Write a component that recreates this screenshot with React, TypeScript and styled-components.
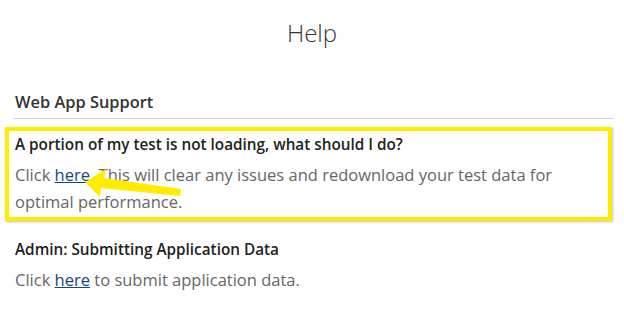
import styled, { createGlobalStyle } from 'styled-components'

const GlobalStyle = createGlobalStyle`
  html, body {
    margin: 0;
    padding: 0;
    background: #fff;
    font-family: "Open Sans", "Liberation Sans", sans-serif;
  }
`

type Faq = {
  question: string
  before: string
  after: string
  highlighted?: boolean
}

const faqs: Faq[] = [
  {
    question: 'A portion of my test is not loading, what should I do?',
    before: 'Click ',
    after:
      '. This will clear any issues and redownload your test data for optimal performance.',
    highlighted: true,
  },
  {
    question: 'Admin: Submitting Application Data',
    before: 'Click ',
    after: ' to submit application data.',
  },
]

// yellow annotation arrow pointing at the first link
const Arrow = () => (
  <SArrow viewBox="0 0 200 90" width="200" height="90">
    <polygon
      points="80,55 101,42 99,51 176,62 175,69 96,61 95,70"
      fill="#ffec00"
    />
  </SArrow>
)

export default function App() {
  return (
    <SPage>
      <GlobalStyle />
      <STitle>Help</STitle>
      <SSectionTitle>Web App Support</SSectionTitle>
      {faqs.map((faq) => (
        <SItem key={faq.question} $highlighted={faq.highlighted}>
          <SQuestion>{faq.question}</SQuestion>
          <SAnswer>
            {faq.before}
            <SLink href="#">here</SLink>
            {faq.after}
          </SAnswer>
          {faq.highlighted && <Arrow />}
        </SItem>
      ))}
    </SPage>
  )
}

const SPage = styled.div`
  width: 624px;
  height: 311px;
  overflow: hidden;
  padding-top: 18px;
  box-sizing: border-box;
`

const STitle = styled.h1`
  margin: 0;
  text-align: center;
  font-size: 24px;
  font-weight: 300;
  line-height: 30px;
  color: #333;
`

const SSectionTitle = styled.h2`
  margin: 44px 10px 0 13px;
  padding: 0 0 6px 2px;
  font-size: 16.4px;
  font-weight: 600;
  line-height: 20px;
  color: #333;
  border-bottom: 1px solid #d6d6d6;
`

const SItem = styled.div<{ $highlighted?: boolean }>`
  position: relative;
  margin: ${(p) => (p.$highlighted ? '8px 12px 0 5px' : '11px 12px 0 5px')};
  padding: 3px 6px 2px 6px;
  border: 4px solid ${(p) => (p.$highlighted ? '#ffec00' : 'transparent')};
  box-shadow: ${(p) => (p.$highlighted ? '1px 1px 2px rgba(0,0,0,0.25)' : 'none')};
`

const SQuestion = styled.div`
  font-size: 15.3px;
  font-weight: 600;
  line-height: 20px;
  color: #222;
`

const SAnswer = styled.p`
  margin: 7px 0 0;
  font-size: 16.5px;
  line-height: 27px;
  color: #666;
`

const SLink = styled.a`
  color: #11497f;
  text-decoration: underline;
`

const SArrow = styled.svg`
  position: absolute;
  left: -4px;
  top: -4px;
  pointer-events: none;
`
